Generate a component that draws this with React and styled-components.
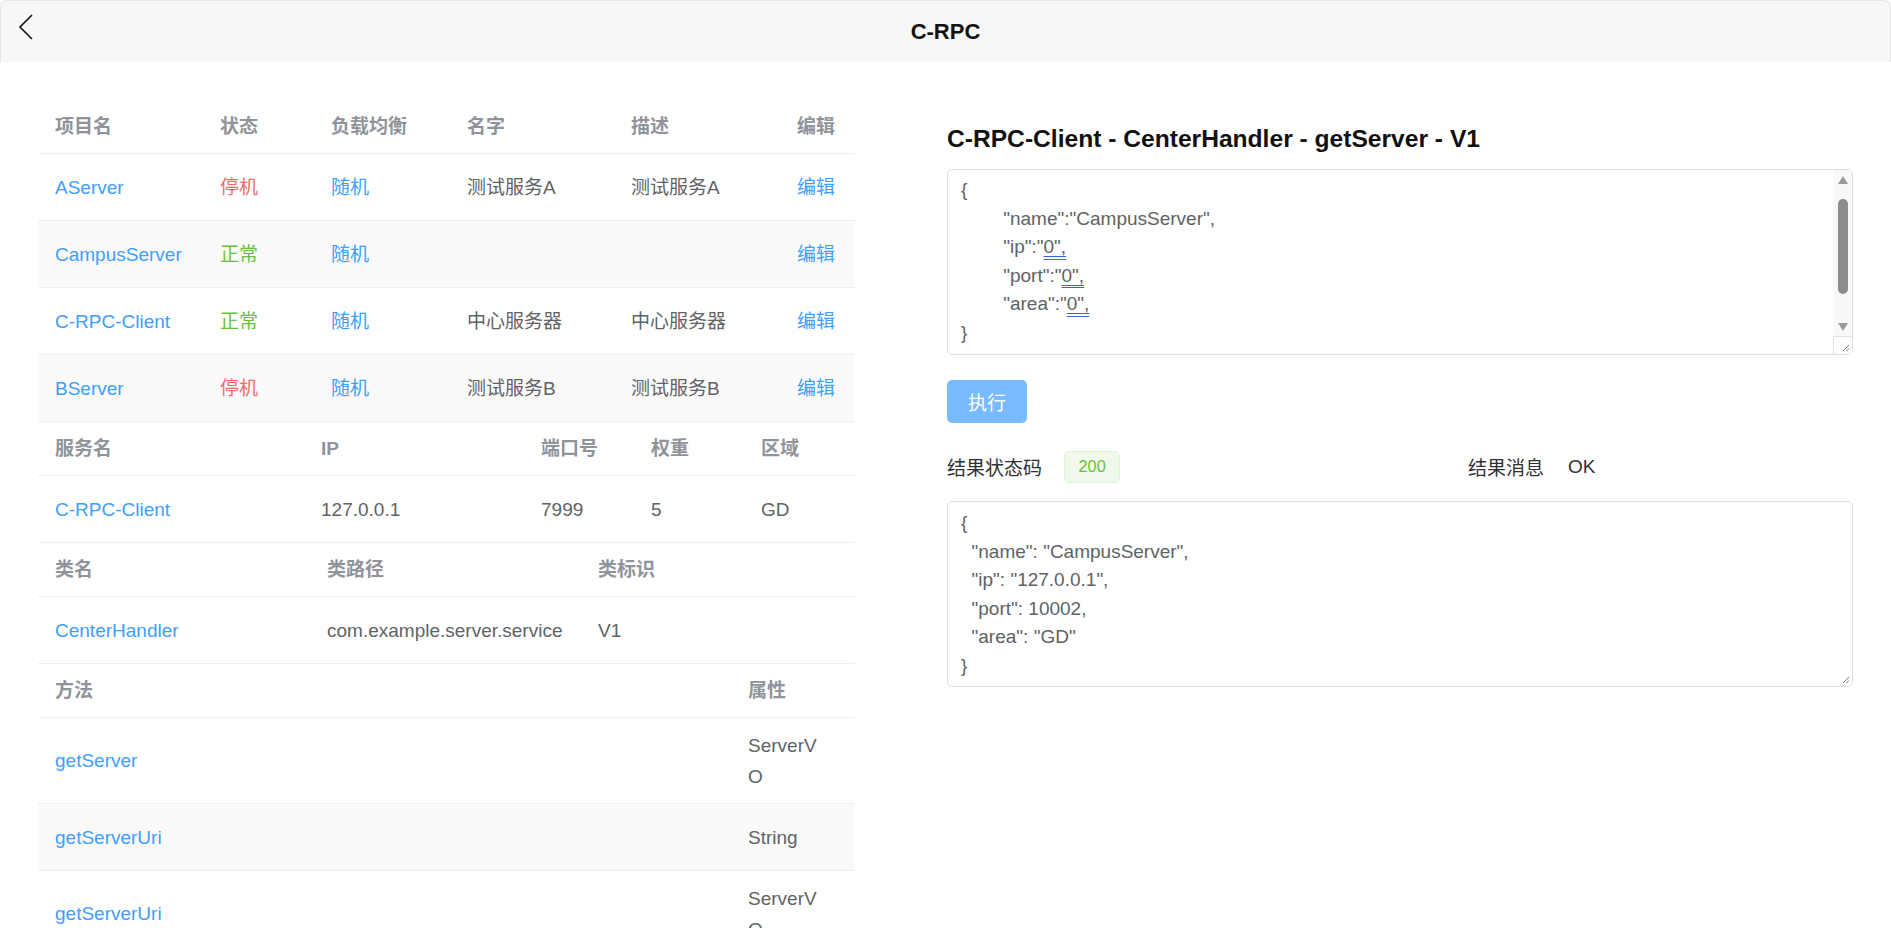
import React from "react"
import styled, { createGlobalStyle } from "styled-components"

const GlobalStyle = createGlobalStyle`
  * { box-sizing: border-box; }
  html, body {
    margin: 0;
    padding: 0;
    overflow: hidden;
    background: #fff;
  }
  body {
    font-family: "Liberation Sans", "Noto Sans CJK SC", sans-serif;
    font-size: 19px;
    color: #606266;
  }
`

const tones = {
  head: "#909399",
  text: "#606266",
  link: "#409eff",
  danger: "#f56c6c",
  success: "#67c23a",
}

const Page = styled.div`
  width: 100%;
  height: 928px;
  overflow: hidden;
`

const TopBar = styled.header`
  height: 62px;
  display: grid;
  grid-template-columns: 1fr auto 1fr;
  align-items: center;
  background: #f7f7f7;
  border: 1px solid #e6e6e6;
  border-bottom: none;
  border-radius: 7px 7px 0 0;
`

const BackButton = styled.button`
  justify-self: start;
  align-self: start;
  margin: 13px 0 0 17px;
  padding: 0;
  border: none;
  background: none;
  display: flex;
`

const BarTitle = styled.h1`
  margin: 0;
  font-size: 22px;
  font-weight: 700;
  color: #111;
`

const Main = styled.main`
  display: grid;
  grid-template-columns: 817px 906px;
  column-gap: 92px;
  padding: 38px 38px 0;
  align-items: start;
`

const Tables = styled.div`
  display: flex;
  flex-direction: column;
`

const Row = styled.div`
  display: grid;
  grid-template-columns: ${(p) => p.$cols};
  min-height: ${(p) => (p.$head ? 54 : 67)}px;
  border-bottom: 1px solid #ebeef5;
  background: ${(p) => (p.$striped ? "#fafafa" : "#fff")};
`

const Cell = styled.div`
  display: flex;
  align-items: center;
  padding: ${(p) => (p.$tone === "head" ? "11px" : "11.5px")} ${(p) => p.$padRight || 12}px
    ${(p) => (p.$tone === "head" ? "11px" : "11.5px")} 17px;
  line-height: 31px;
  word-break: break-all;
  font-weight: ${(p) => (p.$tone === "head" ? 700 : 400)};
  color: ${(p) => tones[p.$tone || "text"]};
`

const Panel = styled.section`
  display: flex;
  flex-direction: column;
`

const PanelTitle = styled.h3`
  margin: 23.5px 0 15.5px;
  font-size: 24.6px;
  line-height: 30px;
  font-weight: 700;
  color: #111;
`

const CodeBox = styled.div`
  display: flex;
  height: 186px;
  border: 1px solid #dcdfe6;
  border-radius: 5px;
  overflow: hidden;
`

const CodeText = styled.div`
  flex: 1;
  padding: 6px 13px 7px;
  white-space: pre;
  tab-size: 8;
  line-height: 28.5px;
  color: #606266;
  overflow: hidden;
`

const Marked = styled.span`
  text-decoration-line: underline;
  text-decoration-style: double;
  text-decoration-color: #3d5ee8;
  text-underline-offset: 3px;
`

const ScrollBar = styled.div`
  width: 19px;
  display: flex;
  flex-direction: column;
  background: #f8f8f8;
`

const ScrollArrow = styled.div`
  height: 19px;
  display: flex;
  align-items: center;
  justify-content: center;
`

const ScrollTrack = styled.div`
  flex: 1;
  display: flex;
  justify-content: center;
  padding-top: 10px;
`

const Thumb = styled.div`
  width: 10px;
  height: 95px;
  border-radius: 5px;
  background: #8c8c8c;
`

const Corner = styled.div`
  height: 18px;
  background: #fff;
  border-top: 1px solid #e2e2e2;
  border-left: 1px solid #e2e2e2;
  display: flex;
  align-items: flex-end;
  justify-content: flex-end;
  padding: 0 2px 2px 0;
`

const RunButton = styled.button`
  margin-top: 25px;
  width: 80px;
  height: 43px;
  border: none;
  border-radius: 5px;
  background: #79bbff;
  color: #fff;
  font-family: inherit;
  font-size: 19px;
  padding: 0;
`

const ResultRow = styled.div`
  margin-top: 22px;
  height: 43px;
  display: grid;
  grid-template-columns: 521px 1fr;
  align-items: center;
`

const Field = styled.div`
  display: flex;
  align-items: center;
  gap: ${(p) => p.$gap}px;
`

const Label = styled.span`
  color: #303133;
`

const Tag = styled.span`
  height: 32px;
  padding: 0 13.5px;
  display: inline-flex;
  align-items: center;
  font-size: 16.3px;
  color: #67c23a;
  background: #f0f9eb;
  border: 1px solid #e1f3d8;
  border-radius: 5px;
`

const ResultBox = styled.div`
  position: relative;
  margin-top: 13px;
  height: 186px;
  border: 1px solid #dcdfe6;
  border-radius: 5px;
  padding: 7px 13px;
  white-space: pre;
  line-height: 28.5px;
  color: #606266;
`

const Grip = styled.svg`
  position: absolute;
  right: 2px;
  bottom: 2px;
`

const Back = () => (
  <svg width="16" height="26" viewBox="0 0 16 26">
    <path d="M14 1 L2 13 L14 25" fill="none" stroke="#111" strokeWidth="1.6" />
  </svg>
)

const GripIcon = (props) => (
  <svg width="8" height="8" viewBox="0 0 8 8" {...props}>
    <path d="M7 1 L1 7 M7 4.5 L4.5 7" stroke="#777" strokeWidth="1" />
  </svg>
)

const projectCols = "165px 111px 136px 164px 166px 75px"
const serviceCols = "266px 220px 110px 110px 111px"
const classCols = "272px 271px 274px"
const methodCols = "693px 124px"

const projects = [
  { name: "AServer", up: false, label: "测试服务A", desc: "测试服务A" },
  { name: "CampusServer", up: true, label: "", desc: "" },
  { name: "C-RPC-Client", up: true, label: "中心服务器", desc: "中心服务器" },
  { name: "BServer", up: false, label: "测试服务B", desc: "测试服务B" },
]

const methods = [
  { name: "getServer", type: "ServerVO" },
  { name: "getServerUri", type: "String" },
  { name: "getServerUri", type: "ServerVO" },
]

const Head = ({ cols, titles }) => (
  <Row $cols={cols} $head>
    {titles.map((t, i) => (
      <Cell key={i} $tone="head">
        {t}
      </Cell>
    ))}
  </Row>
)

const Arrow = ({ up }) => (
  <svg width="10" height="8" viewBox="0 0 10 8">
    <polygon points={up ? "5,0 10,8 0,8" : "0,0 10,0 5,8"} fill="#9a9a9a" />
  </svg>
)

const App = () => {
  return (
    <Page>
      <GlobalStyle />
      <TopBar>
        <BackButton>
          <Back />
        </BackButton>
        <BarTitle>C-RPC</BarTitle>
        <span />
      </TopBar>
      <Main>
        <Tables>
          <div>
            <Head cols={projectCols} titles={["项目名", "状态", "负载均衡", "名字", "描述", "编辑"]} />
            {projects.map((p, i) => (
              <Row key={p.name} $cols={projectCols} $striped={i % 2 === 1}>
                <Cell $tone="link">{p.name}</Cell>
                <Cell $tone={p.up ? "success" : "danger"}>{p.up ? "正常" : "停机"}</Cell>
                <Cell $tone="link">随机</Cell>
                <Cell>{p.label}</Cell>
                <Cell>{p.desc}</Cell>
                <Cell $tone="link">编辑</Cell>
              </Row>
            ))}
          </div>
          <div>
            <Head cols={serviceCols} titles={["服务名", "IP", "端口号", "权重", "区域"]} />
            <Row $cols={serviceCols}>
              <Cell $tone="link">C-RPC-Client</Cell>
              <Cell>127.0.0.1</Cell>
              <Cell>7999</Cell>
              <Cell>5</Cell>
              <Cell>GD</Cell>
            </Row>
          </div>
          <div>
            <Head cols={classCols} titles={["类名", "类路径", "类标识"]} />
            <Row $cols={classCols}>
              <Cell $tone="link">CenterHandler</Cell>
              <Cell>com.example.server.service</Cell>
              <Cell>V1</Cell>
            </Row>
          </div>
          <div>
            <Head cols={methodCols} titles={["方法", "属性"]} />
            {methods.map((m, i) => (
              <Row key={i} $cols={methodCols} $striped={i % 2 === 1}>
                <Cell $tone="link">{m.name}</Cell>
                <Cell $padRight={35}>{m.type}</Cell>
              </Row>
            ))}
          </div>
        </Tables>

        <Panel>
          <PanelTitle>C-RPC-Client - CenterHandler - getServer - V1</PanelTitle>
          <CodeBox>
            <CodeText>
              {"{\n"}
              {'\t"name":"CampusServer",\n'}
              {'\t"ip":"'}<Marked>{'0",'}</Marked>{"\n"}
              {'\t"port":"'}<Marked>{'0",'}</Marked>{"\n"}
              {'\t"area":"'}<Marked>{'0",'}</Marked>{"\n"}
              {"}"}
            </CodeText>
            <ScrollBar>
              <ScrollArrow>
                <Arrow up />
              </ScrollArrow>
              <ScrollTrack>
                <Thumb />
              </ScrollTrack>
              <ScrollArrow>
                <Arrow />
              </ScrollArrow>
              <Corner>
                <GripIcon />
              </Corner>
            </ScrollBar>
          </CodeBox>
          <RunButton>执行</RunButton>
          <ResultRow>
            <Field $gap={22}>
              <Label>结果状态码</Label>
              <Tag>200</Tag>
            </Field>
            <Field $gap={24}>
              <Label>结果消息</Label>
              <Label>OK</Label>
            </Field>
          </ResultRow>
          <ResultBox>
            {'{\n  "name": "CampusServer",\n  "ip": "127.0.0.1",\n  "port": 10002,\n  "area": "GD"\n}'}
            <Grip as={GripIcon} />
          </ResultBox>
        </Panel>
      </Main>
    </Page>
  )
}

export default App
